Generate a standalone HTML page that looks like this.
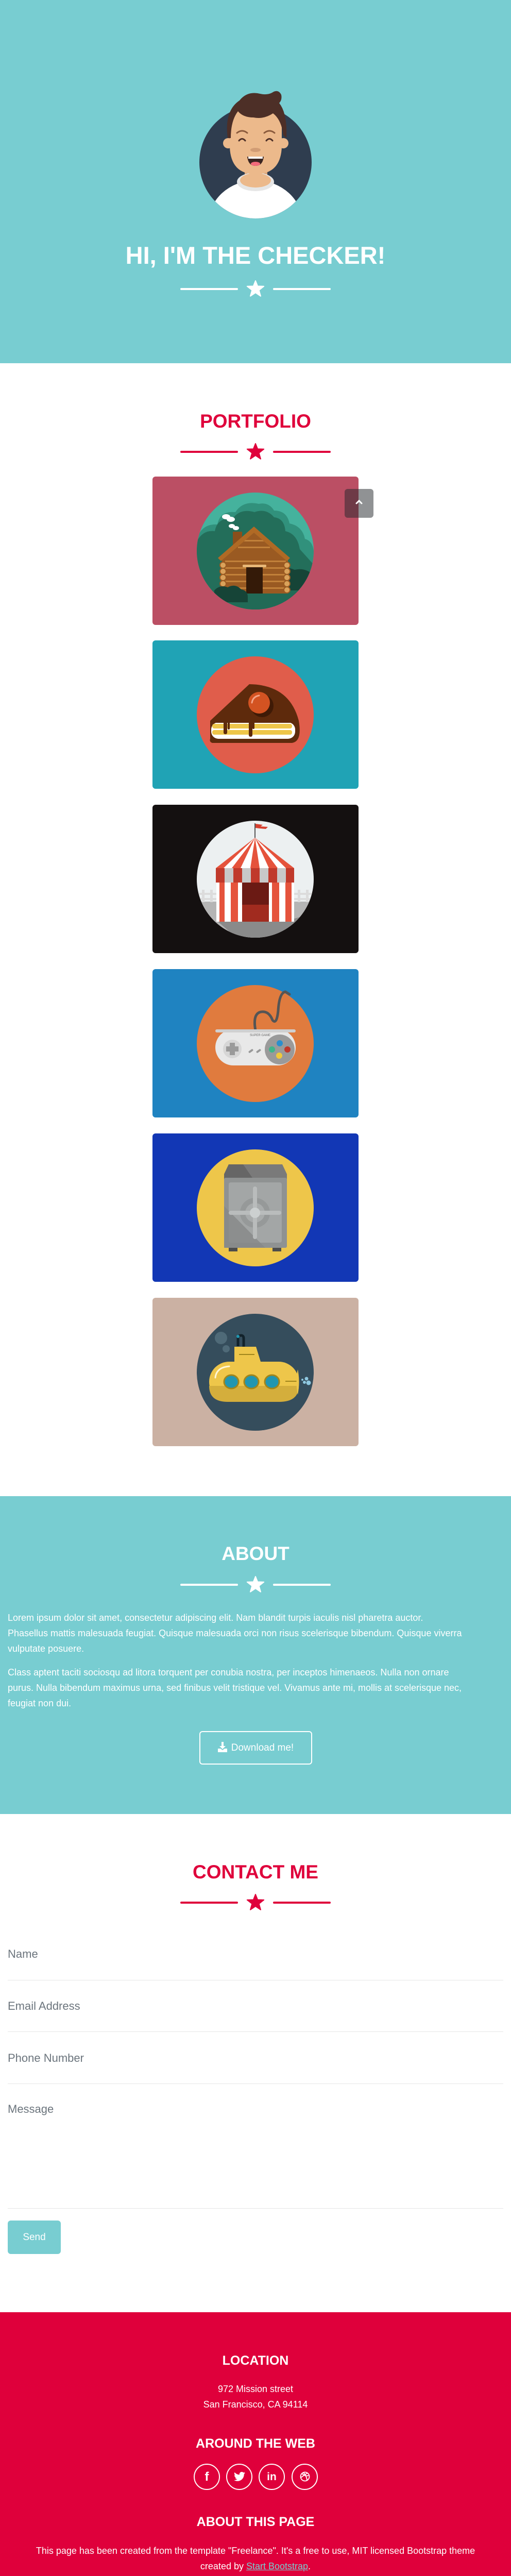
<!DOCTYPE html>
<html><head><meta charset="utf-8"><style>
*{margin:0;padding:0;box-sizing:border-box}
html{width:992px;height:5146px;overflow:hidden}
body{width:992px;height:5146px;position:relative;background:#fff;font-family:"Liberation Sans",sans-serif;overflow:hidden}
.a{position:absolute}
.bg{position:absolute;left:0;width:992px}
.t{position:absolute;left:0;width:992px;text-align:center;font-weight:bold;white-space:nowrap}
.ln{position:absolute;height:4px;border-radius:2px;width:112px}
.card{position:absolute;left:296px;width:400px;height:288px;border-radius:6px;overflow:hidden}
.card svg{position:absolute;left:86px;top:31px}
.lbl{position:absolute;left:15px;font-size:22px;color:#6c757d;line-height:30px}
.hr{position:absolute;left:15px;width:962px;height:1px;background:#e6e6e6}
.p{position:absolute;left:15px;color:#fff;font-size:18px;line-height:30px;white-space:nowrap}
.soc{position:absolute;top:4782px;width:51px;height:51px;border:2px solid #fff;border-radius:50%;color:#fff;text-align:center;font-weight:bold;overflow:hidden}
</style></head><body>
<div class="bg" style="top:0;height:705px;background:#78cdd1"></div>
<div class="bg" style="top:2904px;height:617px;background:#78cdd1"></div>
<div class="bg" style="top:4488px;height:586px;background:#df003b"></div>
<div class="bg" style="top:5074px;height:72px;background:#1b222d"></div>

<svg class="a" style="left:380px;top:170px" width="232" height="260" viewBox="0 0 232 260">
<defs><clipPath id="cc"><circle cx="116" cy="145" r="109"/></clipPath></defs>
<circle cx="116" cy="145" r="109" fill="#2f3d4f"/>
<g clip-path="url(#cc)">
<ellipse cx="116" cy="265" rx="92" ry="85" fill="#fff"/>
<rect x="95" y="155" width="44" height="32" fill="#ecb98b"/>
<rect x="95" y="160" width="44" height="8" fill="#d9a47a"/>
<ellipse cx="116" cy="183" rx="36" ry="18" fill="#e6e6e6"/>
<ellipse cx="116" cy="180" rx="30" ry="14" fill="#ecb98b"/>
</g>
<circle cx="63" cy="108" r="10" fill="#ecb98b"/>
<circle cx="170" cy="108" r="10" fill="#ecb98b"/>
<path d="M66,70 Q66,40 116,38 Q167,40 167,70 L167,115 Q165,168 116,168 Q68,168 66,115 Z" fill="#ecb98b"/>
<path d="M62,98 Q55,45 85,25 Q100,6 125,12 Q138,15 148,10 Q160,2 166,14 Q168,24 162,30 Q178,50 176,98 L170,92 Q166,62 150,50 Q132,62 112,58 Q92,58 82,46 Q68,64 68,98 Z" fill="#4d2f27"/>
<path d="M80,88 Q90,80 100,88" stroke="#8a5a3c" stroke-width="3" fill="none" stroke-linecap="round"/>
<path d="M133,88 Q143,80 153,88" stroke="#8a5a3c" stroke-width="3" fill="none" stroke-linecap="round"/>
<path d="M84,103 Q90,96 96,103" stroke="#4d2f27" stroke-width="3" fill="none" stroke-linecap="round"/>
<path d="M137,103 Q143,96 149,103" stroke="#4d2f27" stroke-width="3" fill="none" stroke-linecap="round"/>
<ellipse cx="116" cy="121" rx="10" ry="4" fill="#d19c74"/>
<path d="M100,134 L132,134 Q130,152 116,152 Q102,152 100,134 Z" fill="#3a2420"/>
<rect x="102" y="134" width="28" height="4" fill="#fff"/>
<ellipse cx="116" cy="148" rx="9" ry="4" fill="#f26b7a"/>
</svg>

<div class="t" style="top:481px;font-size:47px;height:30px;line-height:30px;color:#fff">HI, I'M THE CHECKER!</div>
<div class="ln" style="left:350px;top:559px;background:#fff"></div>
<div class="ln" style="left:530px;top:559px;background:#fff"></div>
<svg class="a" style="left:478px;top:543px" width="36" height="36" viewBox="-18 -18 36 36"><polygon points="0,-16 4.11,-5.66 16.17,-5.25 6.66,2.16 9.99,13.75 0,7 -9.99,13.75 -6.66,2.16 -16.17,-5.25 -4.11,-5.66" fill="#fff" stroke="#fff" stroke-width="2" stroke-linejoin="round"/></svg>

<div class="t" style="top:803px;font-size:37px;line-height:30px;height:30px;color:#df003b">PORTFOLIO</div>
<div class="ln" style="left:350px;top:875px;background:#df003b"></div>
<div class="ln" style="left:530px;top:875px;background:#df003b"></div>
<svg class="a" style="left:478px;top:859px" width="36" height="36" viewBox="-18 -18 36 36"><polygon points="0,-16 4.11,-5.66 16.17,-5.25 6.66,2.16 9.99,13.75 0,7 -9.99,13.75 -6.66,2.16 -16.17,-5.25 -4.11,-5.66" fill="#df003b" stroke="#df003b" stroke-width="2" stroke-linejoin="round"/></svg>

<div class="card" style="top:925px;background:#bb4f64">
<svg width="227" height="227" viewBox="0 0 227 227">
<defs><clipPath id="c1"><circle cx="113.5" cy="113.5" r="113.5"/></clipPath></defs>
<circle cx="113.5" cy="113.5" r="113.5" fill="#45b29d"/>
<g clip-path="url(#c1)">
<path d="M0,227 L0,90 Q10,60 40,62 Q45,35 75,38 Q90,15 120,22 Q140,18 150,35 Q175,35 180,60 Q205,65 210,90 Q230,95 227,130 L227,227 Z" fill="#31917c"/>
<path d="M0,227 L0,95 Q12,72 35,75 Q40,48 70,50 Q85,30 112,38 Q135,30 150,48 Q170,50 172,75 Q195,80 200,110 L227,140 L227,227 Z" fill="#236e5a"/>
<path d="M150,227 L150,150 Q165,140 190,150 Q210,145 227,160 L227,227 Z" fill="#164437"/>
<rect x="0" y="190" width="227" height="40" fill="#216a56"/>
<rect x="70" y="76" width="18" height="26" fill="#8a4f1c"/>
<path d="M111,70 L177,125 L177,196 L49,196 L49,125 Z" fill="#9a5a22"/>
<g fill="#c2813a"><rect x="55" y="132" width="118" height="3"/><rect x="55" y="145" width="118" height="3"/><rect x="55" y="158" width="118" height="3"/><rect x="55" y="171" width="118" height="3"/><rect x="55" y="184" width="118" height="3"/><rect x="80" y="105" width="62" height="3"/><rect x="92" y="92" width="38" height="3"/></g>
<path d="M111,66 L181,127 L175,133 L111,78 L47,133 L41,127 Z" fill="#b06a25"/>
<g fill="#d9a25a" stroke="#9a5a22" stroke-width="2"><circle cx="51" cy="141" r="6"/><circle cx="51" cy="153" r="6"/><circle cx="51" cy="165" r="6"/><circle cx="51" cy="177" r="6"/><circle cx="175" cy="141" r="6"/><circle cx="175" cy="153" r="6"/><circle cx="175" cy="165" r="6"/><circle cx="175" cy="177" r="6"/><circle cx="175" cy="189" r="6"/></g>
<rect x="89" y="140" width="46" height="5" rx="2" fill="#e8b777"/>
<rect x="96" y="145" width="32" height="51" fill="#341a08"/>
<path d="M34,213 L34,190 Q45,178 60,184 Q75,176 86,188 Q99,190 99,203 L99,213 Z" fill="#164437"/>
<g fill="#fff"><ellipse cx="57" cy="47" rx="8" ry="5"/><ellipse cx="66" cy="52" rx="8" ry="5"/><ellipse cx="68" cy="65" rx="6" ry="4"/><ellipse cx="76" cy="69" rx="6" ry="4"/></g>
</g></svg></div>

<div class="card" style="top:1243px;background:#20a3b5">
<svg width="227" height="227" viewBox="0 0 227 227">
<circle cx="113.5" cy="113.5" r="113.5" fill="#e05d4b"/>
<path d="M102,54 Q180,55 198,125 Q205,165 185,168 L30,168 Q24,166 26,160 L26,125 Z" fill="#5e2a0c"/>
<rect x="28" y="128" width="163" height="32" rx="14" fill="#fff"/>
<rect x="30" y="131" width="155" height="9" rx="4" fill="#eec64a"/>
<rect x="30" y="143" width="155" height="9" rx="4" fill="#eec64a"/>
<path d="M26,125 L198,125 L198,129 L26,129 Z" fill="#5e2a0c"/>
<rect x="52" y="125" width="7" height="26" rx="3" fill="#5e2a0c"/>
<rect x="60" y="125" width="4" height="17" rx="2" fill="#5e2a0c"/>
<rect x="101" y="125" width="7" height="31" rx="3" fill="#5e2a0c"/>
<rect x="108" y="125" width="4" height="16" rx="2" fill="#5e2a0c"/>
<circle cx="127" cy="96" r="22" fill="#3f1a06"/>
<circle cx="121" cy="90" r="21" fill="#d35322"/>
<path d="M107,90 Q109,78 121,76" stroke="#f3a58a" stroke-width="3" fill="none" stroke-linecap="round"/>
</svg></div>

<div class="card" style="top:1562px;background:#141010">
<svg width="227" height="227" viewBox="0 0 227 227">
<defs><clipPath id="c3"><circle cx="113.5" cy="113.5" r="113.5"/></clipPath></defs>
<circle cx="113.5" cy="113.5" r="113.5" fill="#ecf0f1"/>
<g clip-path="url(#c3)">
<rect x="0" y="157" width="227" height="70" fill="#b5b5b5"/>
<path d="M38,193 L80,230 L227,230 L227,180 L189,190 Z" fill="#8a8a8a"/>
<g fill="#dcdcdc"><rect x="0" y="140" width="227" height="4"/><rect x="0" y="150" width="227" height="4"/><rect x="10" y="134" width="5" height="24"/><rect x="26" y="134" width="5" height="24"/><rect x="196" y="134" width="5" height="24"/><rect x="212" y="134" width="5" height="24"/></g>
<rect x="112" y="5" width="2" height="30" fill="#555"/>
<path d="M114,6 L128,8 L124,11 L138,12 L134,16 L122,15 L114,14 Z" fill="#d6402f"/>
<path d="M113,33 L189,92 L37,92 Z" fill="#fff"/>
<g fill="#e5533c"><path d="M113,33 L37,92 L52,92 Z"/><path d="M113,33 L68,92 L85,92 Z"/><path d="M113,33 L104,92 L122,92 Z"/><path d="M113,33 L140,92 L157,92 Z"/><path d="M113,33 L173,92 L189,92 Z"/></g>
<rect x="38" y="118" width="151" height="78" fill="#fff"/>
<g fill="#e5533c"><rect x="44" y="118" width="10" height="78"/><rect x="66" y="118" width="14" height="78"/><rect x="146" y="118" width="14" height="78"/><rect x="172" y="118" width="12" height="78"/></g>
<rect x="88" y="118" width="52" height="78" fill="#6b1a14"/>
<rect x="88" y="163" width="52" height="33" fill="#a12b1f"/>
<g><rect x="37" y="92" width="17" height="28" fill="#c0392b"/><rect x="54" y="92" width="17" height="28" fill="#c8c8c8"/><rect x="71" y="92" width="17" height="28" fill="#c0392b"/><rect x="88" y="92" width="17" height="28" fill="#c8c8c8"/><rect x="105" y="92" width="17" height="28" fill="#c0392b"/><rect x="122" y="92" width="17" height="28" fill="#c8c8c8"/><rect x="139" y="92" width="17" height="28" fill="#c0392b"/><rect x="156" y="92" width="17" height="28" fill="#c8c8c8"/><rect x="173" y="92" width="16" height="28" fill="#c0392b"/></g>
</g></svg></div>

<div class="card" style="top:1881px;background:#1f83c1">
<svg width="227" height="227" viewBox="0 0 227 227">
<circle cx="113.5" cy="113.5" r="113.5" fill="#e07b3e"/>
<path d="M114,88 Q108,55 125,52 Q140,50 147,68 Q155,78 158,50 Q160,15 172,13 L180,18" stroke="#555" stroke-width="5" fill="none" stroke-linecap="round"/>
<rect x="36" y="86" width="156" height="70" rx="35" fill="#e8e8e8"/>
<rect x="36" y="86" width="156" height="6" rx="3" fill="#d0d0d0"/>
<circle cx="69" cy="124" r="18" fill="#d6d6d6"/>
<path d="M64,112 h10 v7 h7 v10 h-7 v7 h-10 v-7 h-7 v-10 h7 z" fill="#9a9a9a"/>
<ellipse cx="161" cy="125" rx="29" ry="29" fill="#9a9a9a"/>
<circle cx="161" cy="113" r="6" fill="#2a8fce"/>
<circle cx="146" cy="125" r="6" fill="#3fb58b"/>
<circle cx="176" cy="125" r="6" fill="#c0392b"/>
<circle cx="160" cy="137" r="6" fill="#f0c93c"/>
<rect x="100" y="126" width="10" height="4" rx="2" transform="rotate(-35 105 128)" fill="#999"/>
<rect x="115" y="126" width="10" height="4" rx="2" transform="rotate(-35 120 128)" fill="#999"/>
<text x="103" y="99" font-size="6" fill="#666" font-family="Liberation Sans">SUPER GAME</text>
</svg></div>

<div class="card" style="top:2200px;background:#1237b5">
<svg width="227" height="227" viewBox="0 0 227 227">
<circle cx="113.5" cy="113.5" r="113.5" fill="#eec64a"/>
<path d="M62,29 L166,29 L175,48 L175,58 L53,58 L53,48 Z" fill="#7a7a7a"/>
<path d="M62,29 L90,29 L110,58 L53,58 L53,48 Z" fill="#666"/>
<rect x="53" y="55" width="122" height="136" rx="3" fill="#8f9292"/>
<rect x="62" y="64" width="103" height="117" rx="4" fill="#a3a6a6"/>
<path d="M53,110 L133,191 L53,191 Z" fill="#868888" opacity=".8"/>
<circle cx="113" cy="123" r="29" fill="#969999"/>
<circle cx="113" cy="123" r="19" fill="#a9acac"/>
<rect x="109" y="72" width="8" height="102" rx="4" fill="#b9bcbc"/>
<rect x="62" y="119" width="102" height="8" rx="4" fill="#b9bcbc"/>
<circle cx="113" cy="123" r="10" fill="#ccd0d0"/>
<rect x="62" y="191" width="17" height="7" fill="#4d4d4d"/>
<rect x="147" y="191" width="17" height="7" fill="#4d4d4d"/>
</svg></div>

<div class="card" style="top:2519px;background:#cbb1a3">
<svg width="227" height="227" viewBox="0 0 227 227">
<circle cx="113.5" cy="113.5" r="113.5" fill="#354d5c"/>
<circle cx="47" cy="47" r="12" fill="#4f6a78"/>
<circle cx="57" cy="68" r="7" fill="#4f6a78"/>
<path d="M80,63 L80,47 Q80,42 86,42 Q91,42 91,48 L91,64" stroke="#12222b" stroke-width="5" fill="none"/>
<circle cx="80" cy="44" r="3" fill="#2196b0"/>
<path d="M73,64 L115,64 L124,93 L73,93 Z" fill="#eec64a"/>
<rect x="82" y="78" width="30" height="2" fill="#a0851c"/>
<rect x="24" y="93" width="174" height="78" rx="39" fill="#eec64a"/>
<path d="M24,140 L198,140 Q198,171 160,171 L60,171 Q24,171 24,140 Z" fill="#d4ae3c"/>
<path d="M36,124 Q38,104 63,102" stroke="#fff7d6" stroke-width="3" fill="none" stroke-linecap="round"/>
<g fill="#2196b0" stroke="#a0851c" stroke-width="3"><ellipse cx="67" cy="132" rx="14" ry="13"/><ellipse cx="106" cy="132" rx="14" ry="13"/><ellipse cx="146" cy="132" rx="14" ry="13"/></g>
<rect x="172" y="130" width="22" height="2" fill="#a0851c"/>
<path d="M196,108 Q201,132 196,157 Q191,132 196,108 Z" fill="#eec64a"/>
<g fill="#8fc8e0"><circle cx="205" cy="128" r="2"/><circle cx="209" cy="133" r="3"/><circle cx="213" cy="126" r="3.5"/><circle cx="217" cy="134" r="4.5"/></g>
</svg></div>

<div class="a" style="left:669px;top:949px;width:56px;height:56px;border-radius:6px;background:rgba(33,37,41,.5)"></div>
<svg class="a" style="left:689px;top:966px" width="16" height="16" viewBox="0 0 16 16"><path d="M3,11 L8,6 L13,11" stroke="#fff" stroke-width="3" fill="none" stroke-linecap="round"/></svg>

<div class="t" style="top:3001px;font-size:37px;height:30px;line-height:30px;color:#fff">ABOUT</div>
<div class="ln" style="left:350px;top:3074px;background:#fff"></div>
<div class="ln" style="left:530px;top:3074px;background:#fff"></div>
<svg class="a" style="left:478px;top:3058px" width="36" height="36" viewBox="-18 -18 36 36"><polygon points="0,-16 4.11,-5.66 16.17,-5.25 6.66,2.16 9.99,13.75 0,7 -9.99,13.75 -6.66,2.16 -16.17,-5.25 -4.11,-5.66" fill="#fff" stroke="#fff" stroke-width="2" stroke-linejoin="round"/></svg>
<div class="p" style="top:3125px">Lorem ipsum dolor sit amet, consectetur adipiscing elit. Nam blandit turpis iaculis nisl pharetra auctor.<br>Phasellus mattis malesuada feugiat. Quisque malesuada orci non risus scelerisque bibendum. Quisque viverra<br>vulputate posuere.</div>
<div class="p" style="top:3231px">Class aptent taciti sociosqu ad litora torquent per conubia nostra, per inceptos himenaeos. Nulla non ornare<br>purus. Nulla bibendum maximus urna, sed finibus velit tristique vel. Vivamus ante mi, mollis at scelerisque nec,<br>feugiat non dui.</div>
<div class="a" style="left:387px;top:3360px;width:219px;height:65px;border:2px solid #fff;border-radius:6px;color:#fff;font-size:19px;line-height:61px;text-align:center">
<svg width="18" height="20" viewBox="0 0 18 20" style="vertical-align:-3px;margin-right:8px"><path d="M7,0 h4 v8 h4 l-6,6 l-6,-6 h4 z" fill="#fff"/><path d="M0,13 h5 l4,3 l4,-3 h5 v7 h-18 z" fill="#fff"/></svg>Download me!</div>

<div class="t" style="top:3619px;font-size:37px;height:30px;line-height:30px;color:#df003b">CONTACT ME</div>
<div class="ln" style="left:350px;top:3691px;background:#df003b"></div>
<div class="ln" style="left:530px;top:3691px;background:#df003b"></div>
<svg class="a" style="left:478px;top:3675px" width="36" height="36" viewBox="-18 -18 36 36"><polygon points="0,-16 4.11,-5.66 16.17,-5.25 6.66,2.16 9.99,13.75 0,7 -9.99,13.75 -6.66,2.16 -16.17,-5.25 -4.11,-5.66" fill="#df003b" stroke="#df003b" stroke-width="2" stroke-linejoin="round"/></svg>
<div class="lbl" style="top:3778px">Name</div>
<div class="hr" style="top:3843px"></div>
<div class="lbl" style="top:3879px">Email Address</div>
<div class="hr" style="top:3943px"></div>
<div class="lbl" style="top:3980px">Phone Number</div>
<div class="hr" style="top:4044px"></div>
<div class="lbl" style="top:4079px">Message</div>
<div class="hr" style="top:4286px"></div>
<div class="a" style="left:15px;top:4310px;width:103px;height:65px;border-radius:6px;background:#78cdd1;color:#fff;font-size:19px;line-height:65px;text-align:center">Send</div>

<div class="t" style="top:4567px;font-size:25px;height:30px;line-height:30px;color:#fff">LOCATION</div>
<div class="t" style="top:4622px;font-size:18px;line-height:30px;color:#fff;font-weight:normal">972 Mission street<br>San Francisco, CA 94114</div>
<div class="t" style="top:4728px;font-size:25px;height:30px;line-height:30px;color:#fff">AROUND THE WEB</div>
<div class="soc" style="left:376px;font-size:24px;line-height:47px">f</div>
<div class="soc" style="left:439px"><svg width="22" height="20" viewBox="0 0 24 20" style="margin-top:13px"><path d="M24,2.4 c-.9.4-1.8.6-2.8.8 1-.6 1.8-1.6 2.2-2.7 -1 .6-2 1-3.1 1.2 -.9-1-2.2-1.6-3.6-1.6 -2.7 0-4.9 2.2-4.9 4.9 0 .4 0 .8.1 1.1 C7.7 5.9 4.1 4 1.7 1 1.2 1.8 1 2.6 1 3.5 c0 1.7.9 3.2 2.2 4.1 -.8 0-1.6-.2-2.200-.6 v.1 c0 2.4 1.7 4.4 3.9 4.8 -.4.1-.8.2-1.3.2 -.3 0-.6 0-.9-.1 .6 2 2.4 3.4 4.6 3.4 -1.7 1.3-3.8 2.1-6.1 2.1 -.4 0-.8 0-1.2-.1 C2.2 18.8 4.8 19.6 7.5 19.6 c9.1 0 14-7.5 14-14 v-.6 c1-.7 1.8-1.6 2.5-2.6z" fill="#fff"/></svg></div>
<div class="soc" style="left:502px;font-size:21px;line-height:47px">in</div>
<div class="soc" style="left:566px"><svg width="20" height="20" viewBox="0 0 20 20" style="margin-top:13px"><g stroke="#fff" stroke-width="1.8" fill="none"><circle cx="10" cy="10" r="8.5"/><path d="M4,4 Q10,10 17,8"/><path d="M7,2 Q14,10 14,18"/><path d="M2,12 Q10,6 15,3"/></g></svg></div>
<div class="t" style="top:4880px;font-size:25px;height:30px;line-height:30px;color:#fff">ABOUT THIS PAGE</div>
<div class="t" style="top:4936px;font-size:18px;line-height:30px;color:#fff;font-weight:normal">This page has been created from the template "Freelance". It's a free to use, MIT licensed Bootstrap theme<br>created by <span style="color:#78cdd1;text-decoration:underline">Start Bootstrap</span>.</div>
<div class="t" style="top:5101px;font-size:13px;line-height:20px;color:#fff;font-weight:normal">Copyright © Your Website 2019</div>
</body></html>
